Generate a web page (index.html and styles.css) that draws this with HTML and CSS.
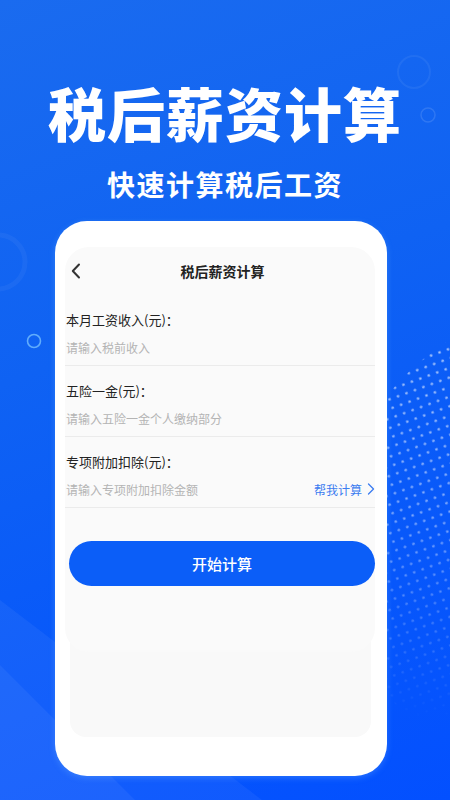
FILE: index.html
```html
<!DOCTYPE html>
<html lang="zh-CN">
<head>
    <meta charset="UTF-8">
    <meta name="viewport" content="width=device-width, initial-scale=1">
    <title>税后薪资计算</title>
    <link rel="stylesheet" href="styles.css">
</head>
<body>
    <div class="page">
        <svg class="deco" width="450" height="800" viewBox="0 0 450 800">
            <defs>
                <pattern id="dots" width="9" height="9" patternUnits="userSpaceOnUse" patternTransform="rotate(-20)">
                    <circle cx="4.5" cy="4.5" r="1.3" fill="#ffffff"/>
                </pattern>
                <linearGradient id="fade" x1="0" y1="0" x2="0" y2="1">
                    <stop offset="0" stop-color="#fff" stop-opacity="0.7"/>
                    <stop offset="0.5" stop-color="#fff" stop-opacity="0.5"/>
                    <stop offset="1" stop-color="#fff" stop-opacity="0"/>
                </linearGradient>
                <mask id="dotMask">
                    <rect x="330" y="300" width="120" height="420" fill="url(#fade)"/>
                </mask>
                <clipPath id="dotClip">
                    <circle cx="575" cy="545" r="240"/>
                </clipPath>
            </defs>
            <!-- light beams bottom left -->
            <polygon points="0,600 262,800 0,800" fill="#ffffff" opacity="0.05"/>
            <polygon points="0,665 135,800 0,800" fill="#ffffff" opacity="0.05"/>
            <!-- rings -->
            <circle cx="414" cy="72" r="16" fill="none" stroke="#ffffff" stroke-width="2" opacity="0.06"/>
            <circle cx="428" cy="115" r="7" fill="none" stroke="#ffffff" stroke-width="1.5" opacity="0.12"/>
            <circle cx="-2" cy="262" r="27" fill="none" stroke="#ffffff" stroke-width="5" opacity="0.045"/>
            <circle cx="34" cy="341" r="6.5" fill="none" stroke="#7cc6ff" stroke-width="1.6" opacity="0.75"/>
            <!-- dot field right -->
            <g clip-path="url(#dotClip)" mask="url(#dotMask)">
                <rect x="330" y="300" width="120" height="420" fill="url(#dots)"/>
            </g>
        </svg>

        <header class="hero">
            <h1>税后薪资计算</h1>
            <p>快速计算税后工资</p>
        </header>

        <div class="phone">
            <div class="screen">
                <div class="nav">
                    <span class="back">
                        <svg width="10" height="16" viewBox="0 0 10 16"><polyline points="8,1.5 1.8,8 8,14.5" fill="none" stroke="#333" stroke-width="2" stroke-linecap="round" stroke-linejoin="round"/></svg>
                    </span>
                    <span class="nav-title">税后薪资计算</span>
                    <span></span>
                </div>

                <div class="field">
                    <div class="field-label">本月工资收入(元)：</div>
                    <div class="field-input"><span class="placeholder">请输入税前收入</span></div>
                </div>
                <div class="field">
                    <div class="field-label">五险一金(元)：</div>
                    <div class="field-input"><span class="placeholder">请输入五险一金个人缴纳部分</span></div>
                </div>
                <div class="field">
                    <div class="field-label">专项附加扣除(元)：</div>
                    <div class="field-input">
                        <span class="placeholder">请输入专项附加扣除金额</span>
                        <span class="help">帮我计算
                            <svg width="8" height="12" viewBox="0 0 8 12"><polyline points="1.5,1 6.5,6 1.5,11" fill="none" stroke="#3b7cf0" stroke-width="1.3" stroke-linecap="round" stroke-linejoin="round"/></svg>
                        </span>
                    </div>
                </div>

                <button class="calc-btn">开始计算</button>
            </div>
            <div class="screen-tail"></div>
        </div>
    </div>
</body>
</html>
```

FILE: styles.css
```css
* {
    margin: 0;
    padding: 0;
    box-sizing: border-box;
    font-family: "Noto Sans CJK SC", "Noto Sans", sans-serif;
}
body {
    width: 450px;
    height: 800px;
    overflow: hidden;
    background-color: #0b5cf6;
}
.page {
    position: relative;
    width: 450px;
    height: 800px;
    overflow: hidden;
    background: linear-gradient(160deg, #1a6bef 0%, #0f62f3 40%, #0757fb 75%, #0350ff 100%);
}
.deco {
    position: absolute;
    left: 0;
    top: 0;
}
.hero {
    position: relative;
    padding-top: 82px;
    text-align: center;
    color: #fff;
}
.hero h1 {
    font-size: 58px;
    line-height: 60px;
    font-weight: 900;
    letter-spacing: 1px;
}
.hero p {
    margin-top: 27px;
    font-size: 28px;
    line-height: 30px;
    font-weight: 700;
    letter-spacing: 1.5px;
}

.phone {
    position: relative;
    margin: 22px 0 0 55px;
    width: 332px;
    height: 555px;
    padding: 26px 0 0 10px;
    background-color: #fff;
    border-radius: 32px;
    box-shadow: 0 2px 6px rgba(120, 190, 255, 0.3);
}
.screen {
    position: relative;
    z-index: 1;
    width: 310px;
    height: 405px;
    background-color: #fafafa;
    border-radius: 24px;
}
.screen-tail {
    margin: -20px 0 0 5px;
    width: 301px;
    height: 105px;
    background-color: #f9f9f9;
    border-radius: 0 0 16px 16px;
}

.nav {
    height: 48px;
    display: grid;
    grid-template-columns: 1fr auto 1fr;
    align-items: center;
}
.back {
    display: flex;
    padding-left: 6px;
}
.nav-title {
    padding-left: 5px;
    font-size: 14px;
    font-weight: 700;
    color: #222;
}

.field {
    padding: 15px 0 8px 1px;
    border-bottom: 1px solid #ebebeb;
}
.field-label {
    font-size: 13px;
    line-height: 20px;
    color: #222;
}
.field-input {
    margin-top: 7px;
    height: 20px;
    display: flex;
    align-items: center;
    justify-content: space-between;
}
.placeholder {
    font-size: 12px;
    color: #b4b4b4;
}
.help {
    display: flex;
    align-items: center;
    gap: 5px;
    font-size: 12px;
    color: #3b7cf0;
}

.calc-btn {
    display: block;
    margin: 33px 0 0 4px;
    width: 306px;
    height: 45px;
    border: none;
    border-radius: 23px;
    background-color: #0b5ef8;
    color: #fff;
    font-size: 15px;
    font-weight: 500;
}
```
